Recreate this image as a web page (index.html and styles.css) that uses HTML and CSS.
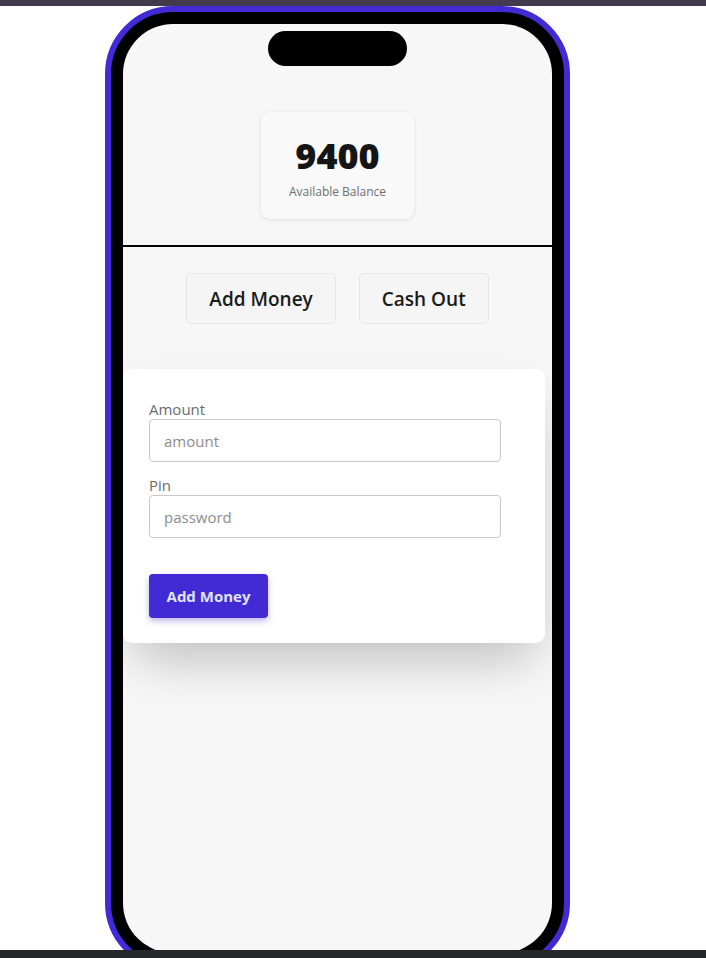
FILE: index.html
```html
<!DOCTYPE html>
<html lang="en">
<head>
    <meta charset="UTF-8">
    <meta name="viewport" content="width=device-width, initial-scale=1.0">
    <title>Wallet</title>
    <link rel="stylesheet" href="styles.css">
</head>
<body>
    <div class="top-bar"></div>

    <div class="stage">
        <div class="phone">
            <div class="screen">
                <div class="camera"></div>

                <!-- Balance -->
                <div class="balance-card">
                    <div class="balance-value">9400</div>
                    <div class="balance-label">Available Balance</div>
                </div>

                <hr class="divider">

                <!-- Actions -->
                <div class="actions">
                    <button class="action-btn">Add Money</button>
                    <button class="action-btn">Cash Out</button>
                </div>

                <!-- Form -->
                <div class="form-card">
                    <form onsubmit="event.preventDefault()">
                        <div class="form-group">
                            <label for="amount">Amount</label>
                            <input type="text" id="amount" placeholder="amount">
                        </div>
                        <div class="form-group">
                            <label for="pin">Pin</label>
                            <input type="password" id="pin" placeholder="password">
                        </div>
                        <button type="submit" class="btn-primary">Add Money</button>
                    </form>
                </div>
            </div>
        </div>
    </div>

    <div class="bottom-bar"></div>
</body>
</html>
```

FILE: styles.css
```css
* {
    margin: 0;
    padding: 0;
    box-sizing: border-box;
}

body {
    font-family: 'Open Sans', 'Noto Sans', sans-serif;
    background: #ffffff;
    height: 958px;
    overflow: hidden;
}

.top-bar {
    height: 6px;
    background: #433a4e;
}

.bottom-bar {
    height: 8px;
    background: #25282b;
}

.stage {
    height: 944px;
    overflow: hidden;
    padding-left: 105px;
}

.phone {
    width: 465px;
    border: 6px solid #422ad5;
    border-radius: 68px;
    background: #000;
    padding: 12px;
}

.screen {
    height: 929px;
    background: #f7f7f7;
    border-radius: 50px;
    overflow: hidden;
    display: flex;
    flex-direction: column;
    align-items: center;
}

.camera {
    width: 139px;
    height: 35px;
    margin-top: 7px;
    background: #000;
    border-radius: 18px;
}

.balance-card {
    margin-top: 46px;
    width: 153px;
    height: 107px;
    padding-top: 24px;
    background: #f9f9f9;
    border-radius: 9px;
    box-shadow: 0 1px 4px rgba(0, 0, 0, 0.1);
    text-align: center;
}

.balance-value {
    font-size: 36px;
    line-height: 40px;
    font-weight: 800;
    color: #151515;
}

.balance-label {
    margin-top: 8px;
    font-size: 12px;
    line-height: 16px;
    color: #6f6f6f;
}

.divider {
    align-self: stretch;
    margin-top: 26px;
    border: none;
    height: 2px;
    background: #000;
}

.actions {
    margin-top: 26px;
    display: flex;
    gap: 23px;
}

.action-btn {
    height: 51px;
    padding: 0 22px;
    font-family: inherit;
    font-size: 19px;
    font-weight: 600;
    color: #1a1a1a;
    background: #f5f5f5;
    border: 1px solid #e6e6e6;
    border-radius: 5px;
}

.form-card {
    align-self: flex-start;
    margin-top: 45px;
    width: 422px;
    padding: 30px 26px 25px;
    background: #fff;
    border-radius: 9px;
    box-shadow: 0 25px 50px -12px rgba(0, 0, 0, 0.25);
}

.form-group {
    margin-bottom: 13px;
}

.form-group + .form-group {
    margin-bottom: 36px;
}

label {
    display: block;
    font-size: 15px;
    line-height: 20px;
    color: #6b6b6b;
}

input[type="text"],
input[type="password"] {
    width: 352px;
    height: 43px;
    padding: 0 14px;
    font-family: inherit;
    font-size: 15px;
    color: #333;
    background: #fff;
    border: 1px solid #c9c9c9;
    border-radius: 4px;
    outline: none;
}

input::placeholder {
    color: #8c8c8c;
}

.btn-primary {
    width: 119px;
    height: 44px;
    font-family: inherit;
    font-size: 15px;
    font-weight: 700;
    color: #e0e4ff;
    background: #422ad5;
    border: none;
    border-radius: 4px;
    box-shadow: 0 3px 6px rgba(66, 42, 213, 0.35);
    cursor: pointer;
}
```
